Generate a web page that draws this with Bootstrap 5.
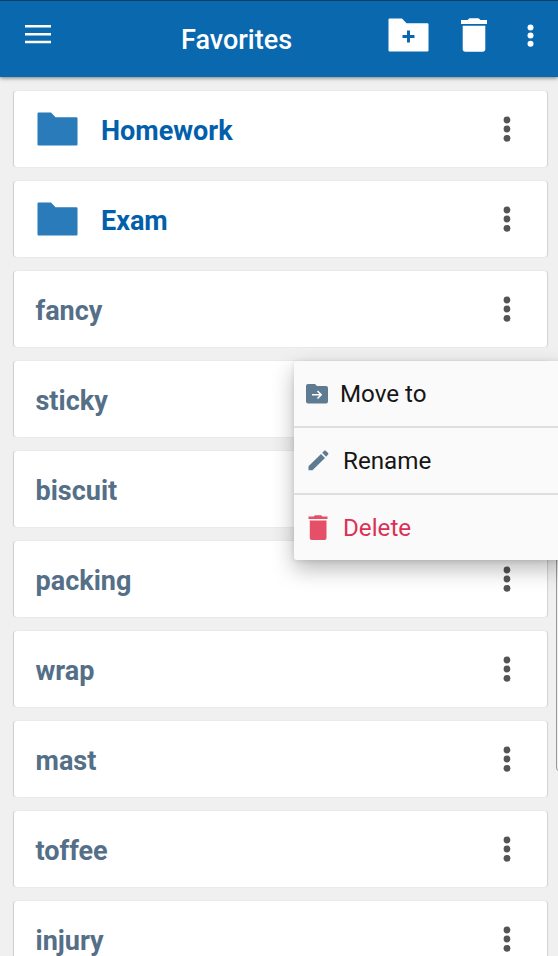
<!DOCTYPE html>
<html lang="en">
<head>
<meta charset="utf-8">
<meta name="viewport" content="width=device-width, initial-scale=1">
<title>Favorites</title>
<link href="https://cdn.jsdelivr.net/npm/bootstrap@5.3.0/dist/css/bootstrap.min.css" rel="stylesheet">
<style>
  body { font-family: Roboto, "Liberation Sans", sans-serif; background: #f0f0f0; height: 956px; }
  .screen { height: 956px; }
  .topbar { height: 77px; background: #0968ae; border-top: 1px solid #073f6c; box-shadow: 0 1px 4px rgba(0,0,0,.5); padding: 0 24px 0 25px; z-index: 1; }
  .topbar h1 { font-size: 27px; line-height: 32px; font-weight: 500; margin: 2px 0 0 130px; }
  .icon-btn { border: 0; padding: 0; background: none; display: block; line-height: 0; }
  .icon-btn svg, .fav-card svg, .action svg { display: block; flex: none; }
  .menu-btn { margin-top: -9px; }
  .trash-btn { margin-left: 32px; }
  .more-btn { margin-left: 40px; }
  .fav-list { padding: 14px 11px 0 14px; gap: 14px; }
  .fav-card { height: 76px; flex: none; border: 0; border-radius: 3px; padding: 0 36px 0 21.5px; box-shadow: -1px 0 1px rgba(0,0,0,.15), 1px 0 1px rgba(0,0,0,.13); }
  .fav-name { font-size: 27px; line-height: 32px; font-weight: 700; color: #546f87; margin-top: 3px; }
  .fav-card.folder { padding-left: 23px; }
  .folder .fav-name { color: #025fac; margin-left: 23px; }
  .action-menu { left: 293.5px; top: 361px; width: 270px; height: 199px; background: #fafafa; border-radius: 3px; box-shadow: 0 9px 22px rgba(0,0,0,.28), 0 1px 5px rgba(0,0,0,.1); z-index: 3; }
  .action { height: 67px; font-size: 24.200px; line-height: 30px; color: #161616; padding: 0 0 0 12.500px; border: 0; background: none; gap: 12px; }
  .action:first-child { height: 65px; }
  .action span { margin-top: 1px; }
  .action + .action { border-top: 2px solid #dedede; padding-left: 14.500px; gap: 13px; }
  .action.remove { color: #dc3056; }
  .action.remove span { margin-left: 2px; }
  .edge-handle { left: 556px; top: 553px; width: 20px; height: 220px; border: 1px solid #999; border-radius: 6px; background: #eee; z-index: 2; }
</style>
</head>
<body>
<svg class="d-none">
  <symbol id="dots" viewBox="0 0 8 26"><circle cx="4" cy="4" r="3.4"/><circle cx="4" cy="13" r="3.4"/><circle cx="4" cy="22.3" r="3.4"/></symbol>
  <symbol id="folder" viewBox="0 0 41 34"><path d="M1.5.5H14l4.5 4.7H39.500Q40.500 5.200 40.500 6.200V32.500Q40.500 33.500 39.500 33.500H1.500Q.5 33.500.5 32.500V1.500Q.5.500 1.500.500Z"/></symbol>
</svg>
<div class="screen position-relative overflow-hidden">
  <header class="topbar d-flex align-items-center text-white position-relative">
    <button class="icon-btn menu-btn" aria-label="Menu"><svg width="26" height="19" fill="#fff"><path d="M0 0h26v2.500H0zM0 8h26v2.500H0zM0 15.700h26v2.500H0z"/></svg></button>
    <h1>Favorites</h1>
    <div class="d-flex align-items-center ms-auto pb-2">
      <button class="icon-btn" aria-label="New folder"><svg width="41" height="34" fill="#fff"><use href="#folder"/><path d="M19 12.500h3v4.500h4.500v3H22v4.500h-3V20h-4.500v-3H19z" fill="#0968ae"/></svg></button>
      <button class="icon-btn trash-btn" aria-label="Delete"><svg width="26" height="34" fill="#fff"><path d="M0 2h6.500L8.500.3h9L19.500 2H26v4H0zM1.700 7.700h22.600V31q0 2.700-2.700 2.700H4.400Q1.700 33.700 1.700 31z"/></svg></button>
      <button class="icon-btn more-btn" aria-label="More"><svg width="7" height="23" fill="#fff"><circle cx="3.500" cy="3.500" r="3"/><circle cx="3.500" cy="11.500" r="3"/><circle cx="3.500" cy="19.700" r="3"/></svg></button>
    </div>
  </header>
  <main class="fav-list d-flex flex-column">
    <div class="card fav-card folder flex-row align-items-center"><svg width="41" height="34" fill="#297bba"><use href="#folder"/></svg><span class="fav-name">Homework</span><svg class="ms-auto" width="8" height="26" fill="#545454"><use href="#dots"/></svg></div>
    <div class="card fav-card folder flex-row align-items-center"><svg width="41" height="34" fill="#297bba"><use href="#folder"/></svg><span class="fav-name">Exam</span><svg class="ms-auto" width="8" height="26" fill="#545454"><use href="#dots"/></svg></div>
    <div class="card fav-card flex-row align-items-center"><span class="fav-name">fancy</span><svg class="ms-auto" width="8" height="26" fill="#545454"><use href="#dots"/></svg></div>
    <div class="card fav-card flex-row align-items-center"><span class="fav-name">sticky</span><svg class="ms-auto" width="8" height="26" fill="#545454"><use href="#dots"/></svg></div>
    <div class="card fav-card flex-row align-items-center"><span class="fav-name">biscuit</span><svg class="ms-auto" width="8" height="26" fill="#545454"><use href="#dots"/></svg></div>
    <div class="card fav-card flex-row align-items-center"><span class="fav-name">packing</span><svg class="ms-auto" width="8" height="26" fill="#545454"><use href="#dots"/></svg></div>
    <div class="card fav-card flex-row align-items-center"><span class="fav-name">wrap</span><svg class="ms-auto" width="8" height="26" fill="#545454"><use href="#dots"/></svg></div>
    <div class="card fav-card flex-row align-items-center"><span class="fav-name">mast</span><svg class="ms-auto" width="8" height="26" fill="#545454"><use href="#dots"/></svg></div>
    <div class="card fav-card flex-row align-items-center"><span class="fav-name">toffee</span><svg class="ms-auto" width="8" height="26" fill="#545454"><use href="#dots"/></svg></div>
    <div class="card fav-card flex-row align-items-center"><span class="fav-name">injury</span><svg class="ms-auto" width="8" height="26" fill="#545454"><use href="#dots"/></svg></div>
  </main>
  <div class="action-menu position-absolute d-flex flex-column">
    <button class="action d-flex align-items-center"><svg width="22" height="20" fill="#5f7b91"><path d="M2 0h7l2 2h9q2 0 2 2v13.500q0 2-2 2H2q-2 0-2-2V2Q0 0 2 0z"/><path d="M6 10.800h9M11.500 7l3.700 3.800-3.700 3.800" fill="none" stroke="#fff" stroke-width="1.500"/></svg><span>Move to</span></button>
    <button class="action d-flex align-items-center"><svg width="22" height="21" fill="#5f7b91"><path d="M.5 16.200 13 4l4 4L4.500 20.200H.5zM14.200 2.800 16.300.7q.7-.7 1.400 0L20.100 3.100q.7.700 0 1.400L18.100 6.700z"/></svg><span>Rename</span></button>
    <button class="action remove d-flex align-items-center"><svg width="20" height="25" fill="#e55068"><path d="M.5 1.500H5.500L7 .2h6l1.500 1.300h5V4H.5zM1.800 5.500h16.700V23q0 2-2 2H3.800q-2 0-2-2z"/></svg><span>Delete</span></button>
  </div>
  <div class="edge-handle position-absolute"></div>
</div>
<script src="https://cdn.jsdelivr.net/npm/bootstrap@5.3.0/dist/js/bootstrap.bundle.min.js"></script>
</body>
</html>
